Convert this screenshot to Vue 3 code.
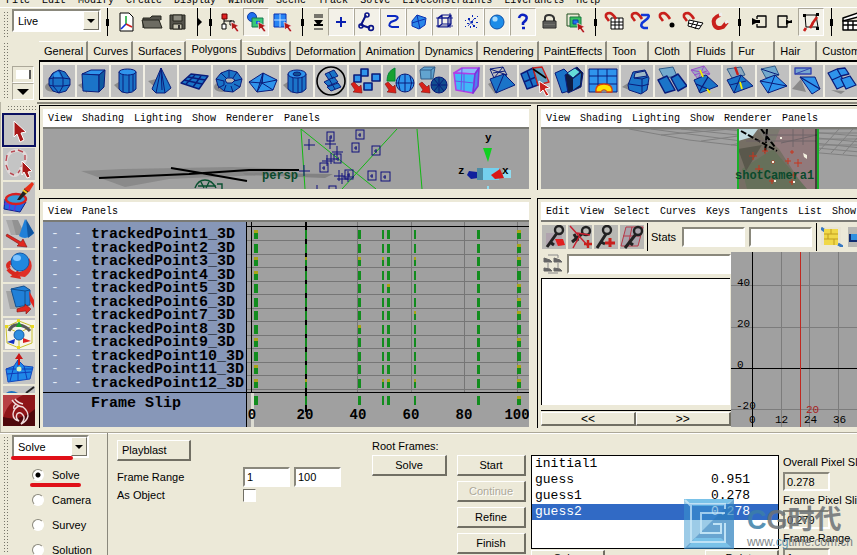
<script setup>
import { h, ref } from "vue";

const menus = [
  "File",
  "Edit",
  "Modify",
  "Create",
  "Display",
  "Window",
  "Scene",
  "Track",
  "Solve",
  "LiveConstraints",
  "LivePanels",
  "Help",
];
const viewMenus = ["View", "Shading", "Lighting", "Show", "Renderer", "Panels"];
const graphMenus = ["Edit", "View", "Select", "Curves", "Keys", "Tangents", "List", "Show"];
const shelfTabs = [
  "General",
  "Curves",
  "Surfaces",
  "Polygons",
  "Subdivs",
  "Deformation",
  "Animation",
  "Dynamics",
  "Rendering",
  "PaintEffects",
  "Toon",
  "Cloth",
  "Fluids",
  "Fur",
  "Hair",
  "Custom",
];
const activeTab = ref("Polygons");
const activeTool = ref("select");
const mode = ref("Solve");
const modes = ["Solve", "Camera", "Survey", "Solution"];
const solutions = [
  { name: "initial1", slip: "" },
  { name: "guess", slip: "0.951" },
  { name: "guess1", slip: "0.278" },
  { name: "guess2", slip: "0.278" },
];
const activeSolution = ref("guess2");
const points = Array.from({ length: 12 }, (_, i) => `trackedPoint${i + 1}_3D`);

// timeline keys: x, width, rows with a yellow tick on top
const keyColumns = [
  { x: 7, w: 4, hot: [0, 2, 3, 8, 10, 11] },
  { x: 58, w: 2, hot: [2, 11] },
  { x: 111, w: 3, hot: [2, 7] },
  { x: 135, w: 2, hot: [2, 11] },
  { x: 140, w: 3, hot: [4, 11] },
  { x: 167, w: 2, hot: [2, 6, 11] },
  { x: 230, w: 3, hot: [] },
  { x: 270, w: 4, hot: [0, 1, 2, 4, 5, 6, 8, 10, 11, 12] },
];
const keyTop = (row) => (row === 12 ? 174 : Math.round(8 + row * 13.5));
const frameLabels = [0, 20, 40, 60, 80, 100];

const trackers = [
  [24, 7, 5],
  [53, 5, 6],
  [49, 18, 5],
  [69, 21, 6],
  [31, 29, 5],
  [17, 38, 6],
  [65, 46, 6],
  [78, 47, 7],
  [42, 45, 6],
  [26, 61, 5],
];
const crosses = [
  [6, 16],
  [27, 15],
  [34, 23],
  [24, 32],
  [28, 30],
  [1, 42],
  [36, 47],
  [39, 50],
  [45, 48],
  [14, 62],
];
const features = [
  [37, 27, 4],
  [49, 22, 3],
  [43, 40, 4],
  [72, 32, 3],
  [82, 34, 4],
  [57, 33, 2],
  [76, 23, 2],
  [78, 46, 3],
  [56, 52, 3],
  [76, 53, 3],
];

const Glyph = (props) =>
  h(
    "svg",
    { viewBox: `0 0 ${props.box} ${props.box}`, width: props.box, height: props.box, "aria-hidden": "true" },
    props.parts.map(([d, fill, stroke, width]) =>
      h("path", {
        d,
        fill: fill || "none",
        stroke: stroke || "none",
        "stroke-width": width || 1,
        "stroke-linejoin": "round",
      })
    )
  );
Glyph.props = ["parts", "box"];

const circle = (x, y, r) => `M${x - r} ${y}a${r} ${r} 0 1 0 ${2 * r} 0a${r} ${r} 0 1 0 ${-2 * r} 0z`;
const ellipse = (x, y, rx, ry) => `M${x - rx} ${y}a${rx} ${ry} 0 1 0 ${2 * rx} 0a${rx} ${ry} 0 1 0 ${-2 * rx} 0z`;

const blue = "#1b74c8";
const deep = "#0f5aa0";
const sky = "#2f94ec";
const line = "#0a1c7a";
const shade = "#8a8a8a";
const red = "#c8201c";
const cursor = (x, y) => [`M${x} ${y}l8 4-3 1 3 4-2 1-3-4-2 2z`, "#b01818", "#fff", 0.6];
const redArrow = ["M2 19l3-2 5 5 2-2 1 8-9-1 2-2z", "#d82018", "#801010", 0.6];
const magnet = (x, y) => [`M${x + 4} ${y + 9}l-3-4q-1-4 4-4 3 1 6 6`, "none", red, 2.6];

const shelfIcons = [
  [
    [ellipse(10, 22, 8, 5), shade],
    ["M10 8l6-3 6 2 5 7v6l-4 6-7 2-6-2-4-6v-6z", blue, line],
    ["M16 5l4 8v8l-4 7M16 5l-6 8v8l6 7M10 8l-4 6 4-1h10l7 1M6 20l4 1h10l7-1", "none", line],
    ["M11 9l4-3 3 6h-7z", sky],
  ],
  [
    ["M1 20l9-4v12z", shade],
    ["M5 9l9-4h14l-6 5z", sky, line],
    ["M5 9l17 1v17L6 26z", blue, line],
    ["M22 10l6-5-1 17-5 5z", deep, line],
  ],
  [
    ["M3 20l8-5v13z", shade],
    ["M8 7v17q2 4 8 4t9-4V7z", blue, line],
    ["M12 10v17M18 10v18M22 9v17", "none", line],
    [ellipse(16.5, 7, 8.5, 3), sky, line],
  ],
  [
    ["M3 16l12-3v14z", shade],
    ["M16 3L7 24l4 4h9l6-5z", blue, line],
    ["M16 3l-5 25M16 3l4 25M16 3l1 22", "none", line],
  ],
  [
    ["M2 18l10-9 17 2-9 13z", blue, line, 1.4],
    ["M7 19l9-9M14 22l8-11M5 15l18 4M9 12l17 3", "none", line, 1.4],
  ],
  [
    [ellipse(9, 22, 8, 5), shade],
    ["M3 14l5-6 8-3 8 2 5 7-2 8-7 5-9-1-6-5z", blue, line],
    ["M3 14l8 2 0 4-6 3M8 8l5 5M16 5v7M24 7l-4 6M29 14l-8 2M27 22l-6-3M20 27l-2-6M11 26l2-6", "none", line],
    ["M12 15l2-2h5l3 2-3 3h-5z", "#b4b4b4", line],
  ],
  [
    ["M2 17l14-9 14 7-4 10-16 2z", sky, line],
    ["M16 8l-6 19 5-9z", blue, line],
    ["M16 8l-1 10 11 7M2 17l13 1 15-3", "none", line],
  ],
  [
    ["M2 20l8-5v13z", shade],
    ["M7 9v15q3 4 9 4t9-4V9z", blue, line],
    ["M12 12v15M17 13v15M21 12v15", "none", line],
    [ellipse(16, 9, 9, 4), sky, line],
    [ellipse(16, 9, 4, 2), "#124f90", line],
  ],
  [
    [circle(16, 16, 14), "none", "#000", 1.6],
    ["M10 9l9-4 4 6-9 4z", blue, line],
    ["M9 17l10-5 4 5-10 4zM12 22l11-4 3 4-10 4z", blue, line],
    ["M14 7l4 7M14 14l6 10", "none", line],
  ],
  [
    ["M5 10h7v7H5zM12 4h7v7h-7zM23 9h8v7h-8zM15 18h8v7h-8z", sky, line, 1.6],
    redArrow,
  ],
  [
    ["M12 3v13H4q0-10 8-13z", "#18a030", "#083"],
    [circle(22, 18, 9), sky, line],
    ["M13 18h18M22 9v18M17 11q-3 7 0 14M27 11q3 7 0 14", "none", line],
    redArrow,
  ],
  [
    ["M3 5l4-3h11l-2 12H4z", "#62a4d0", "#315c88"],
    ["M3 5h11l4-3M14 5v9", "none", "#315c88"],
    [circle(22, 20, 8), "#124f90", line],
    ["M14 20h16M22 12v16M17 14l10 12M27 14L17 26", "none", line],
    redArrow,
  ],
  [
    ["M3 8l8-5h17l-4 6z", "#89b8fa", "#b23ee6", 1.6],
    ["M3 8l21 1-2 19L5 25z", "#40b8f8", "#b23ee6", 1.6],
    ["M24 9l4-6-1 18-5 7z", "#5080f0", "#7c34dc", 1.6],
    ["M4 16l19 2M13 9l0 18M11 3l-1 22", "none", "#6a50e8"],
  ],
  [
    ["M3 19l11-6-4 16z", shade],
    ["M5 4l13-2 4 8-13 3z", "none", line],
    ["M5 14l14-5 11 11-19 8z", blue, line],
    ["M11 28l8-19M5 4l17 6M9 13l9-11M8 8l12-2", "none", line],
  ],
  [
    ["M2 9l12-6 5 17-11 4z", blue, line, 1.4],
    ["M5 17l12-5M8 6l6 16", "none", line, 1.4],
    ["M14 3l9-1 7 15-11 3z", "#60a0c0", red, 1.4],
    ["M14 4l13 9", "none", "#000", 1.6],
    ["M20 16l11 7-5 1 4 6-3 1-3-6-3 3z", red, "#fff"],
  ],
  [
    ["M2 8l9-4 5 5v17l-7 2z", blue, line],
    ["M12 10l12-8 6 6-2 14-13 6z", "#101c40", line],
    ["M14 8l8-5 5 4-7 6z", "#65dcd8", line],
    ["M20 14l8-6-1 12-7 5z", blue],
  ],
  [
    ["M2 4h28v23H2z", sky, line],
    ["M11 4v23M20 4v23M2 11h28M2 19h28", "none", line],
    ["M9 27q-1-8 8-8t8 8h-5q-3-4-6 0z", "#ffe000", "#d84008", 1.3],
    ["M14 27q3-4 6 0z", shade],
  ],
  [
    ["M1 22l12-8v13z", shade],
    ["M7 20l5-13 12-2 4 8-2 12-6 4-12-4z", blue, line],
    ["M14 8l10-2 2 5-13 2z", "#9db8c8", line],
    ["M8 19l13 2M13 13l8 1v14M21 14l6-2M21 21l7-2", "none", line],
  ],
  [
    ["M4 4l14-2 4 9-13 2z", "#71a9ce", "#315c88"],
    ["M3 15l9-4 8 14-10 3z", blue, line, 1.5],
    ["M16 13l7-4 9 12-9 5z", blue, line, 1.5],
  ],
  [
    ["M2 5l13-4 6 8-12 5z", "#9ca9c2", "#9a4fc8"],
    ["M2 5l19 4M9 14l6-13M5 10l13-4", "none", "#9a4fc8"],
    ["M5 15l12-5 12 11-18 7z", blue, line],
    ["M10 27l9-15M7 19l14 6", "none", line, 1.3],
    ["M11 5l3 7M18 24l3 4", "none", "#f4f000", 1.8],
  ],
  [
    ["M4 4l14-2 4 8-13 3z", "#8ba8be", "#315c88"],
    ["M12 2l3 8", "none", red, 2.4],
    ["M4 15l14-5 12 11-19 7z", blue, line],
    ["M11 28l7-18M7 20l16-4", "none", line],
    ["M17 17l2 7", "none", "#f4f000", 1.8],
  ],
  [
    ["M4 4l14-3 4 9-13 3z", "#71a9ce", "#315c88"],
    ["M3 16l15-6 12 11-19 7z", sky, line],
    ["M4 4l18 6M11 28l7-18M3 16l27 5", "none", line],
  ],
  [
    ["M4 3h16v6H4z", "#78a8d0", "#3344b0", 1.4],
    ["M4 9l16-6", "none", "#3344b0"],
    ["M1 24l9-10 5 13z", shade],
    ["M9 12h15l5 12-8 5z", sky, line],
    ["M9 12l20 12", "none", line, 1.3],
  ],
  [
    ["M3 8l9-4 4 7-9 4zM12 4l8-1 4 6-8 2zM7 15l9-4 5 9-9 4z", sky, line, 1.3],
    ["M16 14l9-3 6 9-10 4z", sky, line, 1.3],
    ["M6 25l14 1-4 3z", shade],
  ],
];

// status line, split by separators
const statusItems = [
  { kind: "sep first" },
  {
    parts: [
      ["M6 3h9l4 4v14H6z", "#fff", "#000"],
      ["M12 14V6", "none", "#00a020", 1.4],
      ["M12 14l-5 5", "none", "#1030d8", 1.6],
      ["M12 14l6 3", "none", "#d02020", 1.6],
    ],
  },
  {
    parts: [
      ["M3 18V8h7l2-2h9v4", "#55544c", "#24241c"],
      ["M4 18l-2-8h17l3 8z", "#6d6c62", "#24241c"],
    ],
  },
  {
    parts: [
      ["M4 5h15v14H4z", "#55544c", "#24241c"],
      ["M7 5h9v6H7z", "#8c8b80", "#24241c"],
      ["M7 14h9v5H7z", "#c8c6b4", "#24241c"],
      ["M12 15h2v4h-2z", "#333"],
    ],
  },
  { kind: "sep arrow narrow" },
  { kind: "sep narrow" },
  {
    parts: [
      ["M4 4h5v5H4z", "#e02020", "#600"],
      ["M4 14h4v5H4zM12 11h4v4h-4z", "#fff", "#000"],
      ["M6 9v5M6 11h8", "none", "#000"],
      cursor(13, 12),
    ],
  },
  {
    on: true,
    parts: [
      [circle(8, 7, 4.5), "#2070f0", "#103ca0"],
      ["M8 8h11v9H8z", "#38c878", "#187850"],
      ["M12 11h4v3h-4z", "#1860d8"],
      cursor(14, 12),
    ],
  },
  {
    parts: [
      ["M4 4h12v13H4z", "#2684f4", "#0a30b0"],
      ["M10 4v13M4 10h12", "none", "#bfe0ff"],
      cursor(14, 12),
    ],
  },
  { kind: "sep" },
  {
    parts: [
      ["M7 5h9M7 7h9M7 19h9", "none", "#000"],
      ["M7 10h9l-3 4h3v2H7v-2h3z", "#000"],
    ],
    slim: true,
  },
  { on: true, parts: [["M12 7v10M7 12h10", "none", "#0a20b0", 2]] },
  {
    on: true,
    parts: [
      ["M11 5L6 15l9 3", "none", "#0a1488", 2],
      [circle(12, 5, 2), "none", "#0a1488", 1.6],
      [circle(6, 16, 2), "none", "#0a1488", 1.6],
      [circle(16, 18, 2.4), "none", "#0a1488", 1.6],
    ],
  },
  { on: true, parts: [["M6 6h8q5 1 1 4l-5 2q-4 4 1 5h7", "none", "#0a28c0", 2]] },
  {
    on: true,
    parts: [
      ["M5 11l5-6 9 3-1 7-6 4-7-3z", "#2a86e8", "#0a30b0"],
      ["M10 5l3 14M5 13l13-4", "none", "#0a30b0"],
    ],
  },
  {
    on: true,
    parts: [
      ["M5 8h10v9H5zM9 5h9v9H9zM5 8l4-3M15 8l3-3M15 17l3-3M5 17l4-3", "none", "#0a1488", 1.2],
      ["M3 16h17M17 3v15M3 8h17", "none", "#0a1488", 0.8],
    ],
  },
  {
    on: true,
    parts: [
      [
        "M12 11h2v2h-2zM9 8h2v2H9zM15 8h2v1h-2zM8 13h2v1H8zM14 15h2v2h-2zM11 16h1v2h-1zM6 10h1v1H6zM17 12h2v1h-2zM6 16h1v1H6zM13 5h1v2h-1zM18 6h1v1h-1zM17 17h1v1h-1z",
        "#0a28b8",
      ],
      ["M9 9l6 7M15 9l-6 7", "none", "#0a28b8", 0.8],
    ],
  },
  {
    on: true,
    parts: [
      [circle(12, 12, 7), "#1c8ce8", "#0c50a8"],
      [circle(10, 9, 2.6), "#a8dcff"],
    ],
  },
  { on: true, parts: [["M8 8q1-4 5-3t2 5l-3 3v2M11 18h3", "none", "#0a20c0", 2.6]] },
  {
    parts: [
      ["M8 11V8q0-3 4-3t5 3v3", "none", "#333", 2],
      ["M6 11h13v7H6z", "#70706c", "#222"],
      ["M7 13h11M7 16h11", "none", "#444"],
    ],
  },
  {
    parts: [
      ["M4 4h12v12H4z", "none", "#205020", 1],
      ["M7 7h11v10H7z", "#38c060", "#187840"],
      ["M10 10h5v4h-5z", "#2070f0", "#103ca0"],
      cursor(14, 13),
    ],
  },
  { kind: "sep" },
  {
    parts: [
      ["M8 8h12v11H8zM12 8v11M16 8v11M8 12h12M8 15h12", "#fff", "#000"],
      magnet(2, 2),
    ],
  },
  {
    parts: [
      ["M12 5h7q2 1-1 4l-5 4q-2 4 2 5h4", "none", "#1038d8", 2.6],
      magnet(2, 2),
    ],
  },
  { parts: [[circle(17, 15, 2.5), "#000"], magnet(4, 2)] },
  {
    parts: [
      ["M8 10l14 3-4 6-11-3zM13 11l-3 6M17 12l-3 7M7 13l13 3", "#fff", "#000"],
      magnet(2, 2),
    ],
  },
  {
    parts: [
      ["M13 5q-8 3-6 9t9 3l4-5", "none", red, 4],
      ["M12 5l3-1M18 13l3-2", "none", "#eee", 3],
    ],
  },
  { kind: "sep" },
  { parts: [["M10 6h9v11h-9v-3M10 9V6", "none", "#000", 1.3], ["M5 8l4 2h4v3H9l-4 2z", "#000"]] },
  { parts: [["M14 9V6H5v11h9v-3", "none", "#000", 1.3], ["M13 9l3 2 3-1v3h-3l-3 2z", "#000"]] },
  {
    on: true,
    parts: [
      ["M6 5h11l2 12H7z", "none", "#000", 1],
      ["M4 4h3v3H4zM17 3h3v3h-3zM17 17h3v3h-3z", "#000"],
      ["M18 7l-5 7M14 13l-3 5M7 18l-2 3", "none", red, 2.6],
    ],
  },
  { kind: "sep" },
  {
    parts: [
      ["M4 8l15-5v4L4 11z", "#fff", "#000", 1.5],
      ["M4 11h20v9H4zM4 15h20M9 11v9M14 11v9M19 11v9", "#fff", "#000", 1.4],
    ],
  },
];

const tools = [
  { name: "select", parts: [["M11 7l12 11-5 1 3 7-4 2-3-8-3 3z", "#a81818", "#fff", 1]] },
  {
    name: "lasso",
    parts: [
      ["M6 6q6-6 14-2 6 5 0 12l-5 10q-5 4-9-2Q0 14 6 6", "none", "#e0dada", 3],
      ["M8 4l4-1M15 2l5 2M22 7v5M20 15l-2 4M17 22l-2 3M11 27l-4-2M5 22l-2-5M3 13l1-6", "none", "#b84a54", 1.4],
      ["M19 13l10 10-4 1 2 5-3 1-3-6-2 3z", "#a81818", "#fff", 1],
    ],
  },
  {
    name: "paint",
    parts: [
      ["M2 17l8-5 13 8-6 10-16-3z", "#2464e0", "#10208c"],
      ["M1 22h18M8 14l-2 14M15 15l-4 14", "none", "#7c20d0"],
      [ellipse(13, 17, 10, 5), "#3898d8", "#d82020", 2.4],
      ["M14 18l8-12 4 3-9 9z", "#222"],
      ["M21 7l8-7 2 2-5 8z", "#e83018"],
      ["M20 8l4 3", "none", "#f8c020", 2],
    ],
  },
  {
    name: "move",
    parts: [
      ["M3 4h7l7 15H8z", "#a8a8a8"],
      ["M9 4h6l7 15h-9z", "#929292"],
      ["M22 3l9 14q-7 8-15 3z", "#2080d8"],
      ["M23 3l8 14-6 5z", "#1056a0"],
      ["M4 18l14 8 2-3 4 8-10-1 2-2L3 20z", "#e02820", "#801010", 0.6],
    ],
  },
  {
    name: "rotate",
    parts: [
      ["M5 19q8 10 20 1M6 18q-3-5 4-6", "none", "#d82820", 4],
      ["M15 20l3 9-11-2z", "#d82820"],
      ["M26 8q7 10-4 19l-8-1 9-8z", "#e03028"],
      [circle(17, 12, 9), "#2088e0", "#1458a8"],
      [ellipse(14, 8, 4, 3), "#80c4ff"],
    ],
  },
  {
    name: "scale",
    parts: [
      ["M3 7h13l2 18H7z", "#a2a2a2"],
      ["M8 5l13-3 6 4v15l-14 2z", "#2080d8", "#125090"],
      ["M8 5l14 2 5-1M22 7v14", "none", "#125090"],
      ["M14 25l8-3v-2l6 5-5 5v-3l-9 1z", "#e02820", "#801010", 0.6],
      ["M26 7l5 9v8l-4-7z", "#e02820"],
    ],
  },
  {
    name: "manipulator",
    parts: [
      ["M2 2h30v29H2z", "#f6f4ea"],
      ["M3 9l13-6 13 5v17l-13 5-12-5zM3 9l13 6 13-7M16 15v15", "none", "#c8c030"],
      ["M6 13q3-7 10-6t11 6", "none", "#585858", 3],
      [circle(16, 17, 5), "#3090e0", "#145ca8"],
      ["M16 3l3 6h-6z", "#18a828"],
      ["M4 24l8-3-1 5z", "#1030c0"],
      ["M28 23l-8-3v5z", "#d82020"],
      ["M14 1h3v3h-3zM2 7h3v3H2zM28 7h3v3h-3zM14 28h3v3h-3z", "#e8d820"],
    ],
  },
  {
    name: "soft",
    parts: [
      ["M3 17l8-3 4-6 6 6 9 1-3 12-22 3z", "#2088e8", "#1048c0"],
      ["M11 14l-4 15M15 8v21M21 14l3 13M4 22l24-2M3 17h26", "none", "#103cb8"],
      ["M16 1l4 6h-3v6h-2V7h-3z", "#c81818"],
      [circle(16, 17, 2.5), "#d8f4c0"],
    ],
  },
];

const keyTools = [
  [
    ["M4 8h16v13H4z", "#b0a4ae"],
    [circle(17, 5, 4), "none", "#222", 2.4],
    ["M15 8L5 22M8 17l4 3", "none", "#222", 3],
    ["M13 14h8l2 6-7 1z", "#e02020"],
  ],
  [
    [circle(18, 6, 4), "none", "#222", 2.4],
    ["M15 8L4 17M6 9l4 7", "none", "#222", 3],
    ["M2 1l18 20M11 12L5 23M9 8l13 2", "none", "#c82030", 1.5],
    ["M20 15v8M16 19h8", "none", red, 2.4],
  ],
  [
    [circle(13, 5, 4), "none", "#222", 2.4],
    ["M12 9L3 23M7 17l4 2", "none", "#222", 3],
    ["M16 13v9M11 18h10", "none", red, 3],
  ],
  [
    ["M6 2h17l-5 19H1z", "#aaa4ac", "#b83848"],
    ["M12 2L8 21M3 11h17", "none", "#b83848"],
    [circle(18, 6, 4), "none", "#222", 2.4],
    ["M16 9L5 23M9 17l4 3", "none", "#222", 3],
  ],
];
</script>

<template>
  <div class="maya">
    <nav class="menu-bar">
      <button v-for="item in menus" :key="item" class="menu-bar__item">{{ item }}</button>
    </nav>

    <div class="status">
      <span class="grip"></span>
      <label class="combo combo--live">
        <select class="combo__select" aria-label="Menu set">
          <option>Live</option>
        </select>
        <span class="combo__arrow"></span>
      </label>
      <template v-for="(item, i) in statusItems" :key="i">
        <span v-if="item.kind" class="status__sep" :class="item.kind"></span>
        <button
          v-else
          class="status__button"
          :class="{ 'status__button--on': item.on, 'status__button--slim': item.slim }"
          :aria-label="`Status tool ${i}`"
        >
          <Glyph :parts="item.parts" :box="24" />
        </button>
      </template>
    </div>

    <div class="shelf">
      <span class="grip"></span>
      <div class="shelf__side">
        <button class="shelf__switch" aria-label="Shelf tabs"><i class="shelf__page"></i></button>
        <button class="shelf__switch" aria-label="Shelf menu"><i class="triangle"></i></button>
      </div>
      <div class="shelf__main">
        <div class="tabs">
          <button
            v-for="tab in shelfTabs"
            :key="tab"
            class="tabs__item"
            :class="{ 'tabs__item--active': tab === activeTab }"
            @click="activeTab = tab"
          >
            {{ tab }}
          </button>
        </div>
        <div class="shelf__icons">
          <button v-for="(parts, i) in shelfIcons" :key="i" class="shelf__icon" :aria-label="`Polygon tool ${i + 1}`">
            <Glyph :parts="parts" :box="32" />
          </button>
        </div>
      </div>
    </div>

    <div class="work">
      <aside class="toolbox">
        <span class="toolbox__grip"></span>
        <button
          v-for="tool in tools"
          :key="tool.name"
          class="toolbox__item"
          :class="{ 'toolbox__item--active': tool.name === activeTool }"
          :aria-label="tool.name"
          @click="activeTool = tool.name"
        >
          <Glyph :parts="tool.parts" :box="32" />
        </button>
        <span class="toolbox__rest">
          <svg width="32" height="7" viewBox="0 0 32 7">
            <path d="M3 7q5-4 12 0z" fill="#1d70c0" />
            <path d="M23 7l8-6" stroke="#222" stroke-width="2" />
          </svg>
        </span>
        <svg class="toolbox__logo" width="32" height="31" viewBox="0 0 32 31" aria-hidden="true">
          <path d="M0 0h32v31H0z" fill="#8e1518" />
          <path d="M0 0h20Q3 8 0 24z" fill="#b84044" />
          <path d="M0 22q18 5 32-8v17H0z" fill="#4d080c" />
          <path
            d="M9 5q4 6 11 7 5 4 5 9-1 5-7 8 5-6 2-9-3-4-6-1-2 4 2 7-6-1-6-7 1-6 6-8M12 4q3 4 8 5M11 14q-1-3 2-5"
            fill="none"
            stroke="#f0dcdc"
            stroke-width="1.4"
          />
        </svg>
      </aside>

      <div class="panels">
        <section class="panel">
          <nav class="panel__menu">
            <button v-for="item in viewMenus" :key="item">{{ item }}</button>
          </nav>
          <svg class="panel__canvas" role="img" aria-label="persp">
            <path d="M38 42l42-2 108-2 60 2-32 6-90 4-44 8z" fill="#8a8a8a" />
            <path d="M200 44l90 1-8 4-80-3z" fill="#828282" />
            <path d="M56 49l90-4 60-4 50 0M128 39l30 5 46 8" fill="none" stroke="#000" stroke-width="2" />
            <g fill="none" stroke="#12b812">
              <path d="M258 0l4 60M258 0l75 60M354 0l-55 60M374 0l5 60" />
            </g>
            <g fill="none" stroke="#0a5030" stroke-width="1.4">
              <path d="M152 59q3-8 10-8t11 8M155 57h18M158 53l3 6M166 53l-3 6M174 55h5v5" />
            </g>
            <g fill="none" stroke="#10107c" transform="translate(260 0)">
              <template v-for="(t, i) in trackers" :key="i">
                <rect :x="t[0]" :y="t[1] - 4" :width="t[2] + 2" height="9" />
                <path :d="`M${t[0] + 2} ${t[1] + 1}h3M${t[0] + 4} ${t[1] - 1}v4`" />
              </template>
              <path v-for="(c, i) in crosses" :key="`c${i}`" :d="`M${c[0] - 5} ${c[1]}h11M${c[0]} ${c[1] - 6}v11`" />
            </g>
            <text x="219" y="50" class="camera-label">persp</text>
            <g>
              <path d="M440 19h9l-4 14z" fill="#10d020" />
              <path d="M424 46l2-4 16 2v4l-14 2z" fill="#10209c" />
              <rect x="436" y="39" width="20" height="12" fill="#74d0ee" />
              <rect x="434" y="39" width="6" height="12" fill="#4e8ca4" />
              <path d="M460 41h8v8h-8z" fill="#90dcf0" />
              <path d="M448 46l9-6 4 9-9 1z" fill="#d81818" />
              <path d="M444 57h2v3h-2z" fill="#90dcf0" />
              <text x="442" y="12" class="axis-label">y</text>
              <text x="415" y="45" class="axis-label">z</text>
              <text x="459" y="45" class="axis-label">x</text>
            </g>
          </svg>
        </section>

        <section class="panel">
          <nav class="panel__menu">
            <button v-for="item in viewMenus" :key="item">{{ item }}</button>
          </nav>
          <svg class="panel__canvas" role="img" aria-label="shotCamera1">
            <g fill="none" stroke="#808080">
              <path d="M88 0l60 11 70 8 110 9M110 0l90 12 130 12M140 0l190 20M180 0l150 14M230 0l100 8" />
              <path d="M278 22l20-22M290 24l22-24M302 25l22-25M160 12l90-12M190 16l80-16M120 6l70-6M90 0h240M276 4h60M276 10h60M276 16h60" />
            </g>
            <path d="M197 0h79v60h-79z" fill="#766f64" />
            <path d="M216 0h60v60h-12L238 20z" fill="#917a7c" />
            <path d="M197 0h20l-6 8-14 4z" fill="#c4dce0" />
            <path d="M232 20l34 40h-60l-5-20z" fill="#66705a" />
            <path d="M197 20l24-4-16 26z" fill="#5a584c" />
            <path d="M217 0h22l-9 22z" fill="#7c7a70" />
            <path d="M200 2l36 20M220 0l14 18M226 0l-2 24" fill="none" stroke="#000" stroke-width="2" stroke-dasharray="6 2" />
            <path d="M205 12h70M222 6h54M240 14l36-8M252 0v18M262 0v16" fill="none" stroke="#6f6468" />
            <path
              v-for="(f, i) in features"
              :key="i"
              :d="`M${f[0] + 175 - f[2]} ${f[1]}h${f[2] * 2}M${f[0] + 175} ${f[1] - f[2]}v${f[2] * 2}`"
              stroke="#c8341c"
            />
            <path d="M262 24l4 2v4l-3-2zM233 51h2v2h-2zM252 52h2v2h-2zM231 32h2v2h-2zM239 8h2v2h-2z" fill="#f4f0e0" />
            <path d="M197 0v60M277 0v60" stroke="#18b028" stroke-width="2" />
            <path d="M275 0v60" stroke="#000" />
            <text x="194" y="50" class="camera-label">shotCamera1</text>
          </svg>
        </section>

        <section class="panel">
          <nav class="panel__menu">
            <button>View</button>
            <button>Panels</button>
          </nav>
          <div class="dope">
            <div class="dope__names">
              <ul class="dope__list">
                <li v-for="point in points" :key="point"><i>-</i><i>-</i>{{ point }}</li>
              </ul>
              <div class="dope__footer">Frame Slip</div>
            </div>
            <svg class="dope__keys" role="img" aria-label="Keys">
              <g fill="#767676">
                <rect v-for="n in 12" :key="n" x="0" :y="Math.round(4.5 + n * 13.5)" width="100%" height="1" />
                <rect v-for="x in [110, 164, 217, 270]" :key="x" :x="x" y="0" width="1" height="170" />
              </g>
              <rect x="4" y="171" width="3" height="34" fill="#dcdcd2" />
              <rect x="0" y="4" width="100%" height="1" />
              <rect x="0" y="170" width="100%" height="1" />
              <rect x="4" y="0" width="1" height="170" />
              <rect x="58" y="0" width="2" height="190" />
              <template v-for="col in keyColumns" :key="col.x">
                <template v-for="row in 13" :key="row">
                  <rect :x="col.x" :y="keyTop(row - 1)" :width="col.w" height="9" fill="#128c1e" />
                  <rect
                    v-if="col.hot.includes(row - 1)"
                    :x="col.x"
                    :y="keyTop(row - 1)"
                    :width="col.w"
                    height="3"
                    fill="#a8a418"
                  />
                </template>
              </template>
              <text v-for="(label, i) in frameLabels" :key="label" :x="5 + i * 53" y="197" class="frame-label">
                {{ label }}
              </text>
            </svg>
          </div>
        </section>

        <section class="panel">
          <nav class="panel__menu">
            <button v-for="item in graphMenus" :key="item">{{ item }}</button>
          </nav>
          <div class="graph-tools">
            <button v-for="(parts, i) in keyTools" :key="i" class="graph-tools__key" :aria-label="`Key tool ${i + 1}`">
              <Glyph :parts="parts" :box="24" />
            </button>
            <label class="graph-tools__stats">
              Stats
              <input type="text" class="field" />
            </label>
            <input type="text" class="field" aria-label="Value" />
            <span class="graph-tools__sep"></span>
            <svg width="22" height="20" viewBox="0 0 22 20" aria-hidden="true">
              <path d="M0 0h20v18H0z" fill="#e8e4d4" />
              <path d="M0 1l4 3M17 17l5 3" stroke="#3878c0" stroke-width="3" />
              <path d="M3 2h14v16H3z" fill="#f0d848" />
              <path d="M3 7h14M3 12h14M10 2v5M7 7v5M13 12v6" stroke="#c09c20" />
            </svg>
            <svg class="graph-tools__frame" width="22" height="20" viewBox="0 0 22 20" aria-hidden="true">
              <path d="M0 0h22v20H0z" fill="#b8b8b4" />
              <path d="M2 7v7h18V7" fill="#3090e0" stroke="#102c70" stroke-width="2" />
            </svg>
          </div>
          <div class="graph">
            <div class="graph__outline">
              <div class="graph__filter">
                <svg width="22" height="20" viewBox="0 0 22 20" aria-hidden="true">
                  <path d="M2 4l6 2 2 2H2zM12 4l6 2 2 2h-8zM2 14l6 1 2 2H2zM12 14l6 1 2 2h-8z" fill="#666" stroke="#666" />
                  <path d="M6 1h10v3M6 9v5M16 9v5M6 19h10" fill="none" stroke="#888" />
                </svg>
                <input type="text" class="field" aria-label="Filter" />
              </div>
              <div class="graph__list"></div>
              <div class="graph__nav">
                <button class="button">&lt;&lt;</button>
                <button class="button">&gt;&gt;</button>
              </div>
            </div>
            <svg class="graph__plot" role="img" aria-label="Curves">
              <g fill="#7c7c7c">
                <rect v-for="y in [33, 75, 157]" :key="y" x="0" :y="y" width="100%" height="1" />
                <rect v-for="x in [50, 78, 107]" :key="x" :x="x" y="0" width="1" height="100%" />
              </g>
              <rect x="0" y="116" width="100%" height="1" />
              <rect x="21" y="0" width="1" height="100%" />
              <rect x="69" y="0" width="1" height="100%" fill="#c02820" />
              <g class="plot-label">
                <text x="6" y="34">40</text>
                <text x="6" y="75">20</text>
                <text x="6" y="116">0</text>
                <text x="5" y="157">-20</text>
                <text x="18" y="171">0</text>
                <text x="44" y="171">12</text>
                <text x="73" y="171">24</text>
                <text x="102" y="171">36</text>
                <text x="75" y="161" fill="#a82020">20</text>
              </g>
            </svg>
          </div>
        </section>
      </div>
    </div>

    <div class="live">
      <span class="grip"></span>
      <div class="live__modes">
        <label class="combo combo--mode">
          <select class="combo__select" aria-label="Panel">
            <option>Solve</option>
          </select>
          <span class="combo__arrow"></span>
        </label>
        <label v-for="item in modes" :key="item" class="radio">
          <input v-model="mode" type="radio" name="mode" :value="item" />
          {{ item }}
        </label>
        <span class="mark mark--combo"></span>
        <span class="mark mark--radio"></span>
      </div>

      <div class="live__range">
        <button class="button button--left">Playblast</button>
        <div class="form-row">
          <label for="range-start">Frame Range</label>
          <input id="range-start" type="text" class="field" value="1" />
          <input type="text" class="field" value="100" aria-label="Range end" />
        </div>
        <div class="form-row form-row--check">
          <label for="as-object">As Object</label>
          <input id="as-object" type="checkbox" class="check" />
        </div>
      </div>

      <div class="live__root">
        <span>Root Frames:</span>
        <button class="button">Solve</button>
      </div>

      <div class="live__actions">
        <button class="button">Start</button>
        <button class="button" disabled>Continue</button>
        <button class="button">Refine</button>
        <button class="button">Finish</button>
      </div>

      <div class="live__solutions">
        <ul class="solutions">
          <li
            v-for="item in solutions"
            :key="item.name"
            :class="{ active: item.name === activeSolution }"
            @click="activeSolution = item.name"
          >
            <span>{{ item.name }}</span><span>{{ item.slip }}</span>
          </li>
        </ul>
        <div class="live__pair">
          <button class="button">Solve</button>
          <button class="button">Delete</button>
        </div>
      </div>

      <div class="live__slip">
        <label>Overall Pixel Slip<input type="text" class="field" value="0.278" readonly /></label>
        <label>Frame Pixel Slip<input type="text" class="field" value="0.279" readonly /></label>
        <label>Frame Range<input type="text" class="field" value="1" readonly /></label>
      </div>

      <div class="watermark">
        <svg width="52" height="52" viewBox="0 0 52 52" aria-hidden="true">
          <path d="M1 1h50v50H1z" fill="#3d9ad0" fill-opacity="0.6" />
          <path d="M1 51L51 1v50z" fill="#2878b8" fill-opacity="0.6" />
          <path d="M1 1h50L40 8H10zM12 40h26l10 9H5z" fill="#63b8e4" />
          <path d="M8 8L2 2M42 11V6H8v38h34V25M42 15H18v20h20v-9h-8" fill="none" stroke="#b4def4" stroke-width="2" />
        </svg>
        <div class="watermark__text">
          <strong><b>C</b>G时代</strong>
          <span>www.<b>cg</b>time.com.cn</span>
        </div>
      </div>
    </div>
  </div>
</template>

<style>
body {
  margin: 0;
  overflow: hidden;
}
</style>

<style scoped>
.maya {
  --face: #ece9d8;
  --dark: #716f64;
  --grey: #a0a0a0;
  display: flex;
  flex-direction: column;
  height: 100vh;
  overflow: hidden;
  background: var(--face);
  color: #000;
  font: 11px/14px "Liberation Sans", sans-serif;
}

.maya * {
  box-sizing: border-box;
}

button,
input,
select {
  margin: 0;
  padding: 0;
  border: 0;
  border-radius: 0;
  background: none;
  color: inherit;
  font: inherit;
}

svg {
  display: block;
  flex: none;
}

ul {
  margin: 0;
  padding: 0;
  list-style: none;
}

.menu-bar {
  display: flex;
  flex: 0 0 7px;
  align-items: flex-end;
  gap: 12px;
  padding-left: 6px;
  overflow: hidden;
}

.menu-bar__item,
.panel__menu button {
  flex: none;
  font: 10px/12px "Liberation Mono", monospace;
  white-space: nowrap;
}

.grip {
  flex: none;
  width: 5px;
  margin: 3px 4px 2px 3px;
  background: radial-gradient(circle, #77756a 0 0.8px, transparent 1px) 0 0 / 3px 3px;
}

.status {
  display: flex;
  flex: 0 0 32px;
  border-top: 1px solid #fff;
  overflow: hidden;
}

.status > * {
  flex: none;
}

.combo {
  position: relative;
  display: flex;
  height: 23px;
  border: 2px solid;
  border-color: #8a887c #fff #fff #8a887c;
  background: #fff;
}

.combo--live {
  width: 89px;
  margin-top: 1px;
}

.combo--mode {
  width: 77px;
}

.combo__select {
  flex: 1;
  padding-left: 4px;
  appearance: none;
  outline: none;
}

.combo__arrow {
  display: flex;
  align-items: center;
  justify-content: center;
  width: 16px;
  border: 1px solid;
  border-color: #fff var(--dark) var(--dark) #fff;
  background: var(--face);
  pointer-events: none;
}

.combo__arrow::before,
.triangle {
  border: 4px solid transparent;
  border-top-color: #000;
  border-bottom: 0;
  content: "";
}

.triangle {
  border-width: 6px 6px 0;
}

.status__sep {
  display: flex;
  align-items: center;
  justify-content: center;
  width: 14px;
  height: 28px;
  background: linear-gradient(#000, #000) center / 1px 100% no-repeat;
}

.status__sep::before {
  width: 3px;
  height: 7px;
  background: #000;
  content: "";
}

.status__sep.first {
  width: 12px;
}

.status__sep.narrow {
  width: 13px;
}

.status__sep.arrow::before {
  width: 0;
  height: 0;
  margin-left: 4px;
  border: 4px solid transparent;
  border-left-color: #000;
  border-right: 0;
  background: none;
}

.status__button {
  display: flex;
  align-items: center;
  justify-content: center;
  width: 26px;
  height: 28px;
  border: 1px solid transparent;
  overflow: hidden;
}

.status__button--on {
  border-color: #aca899 #fff #fff #aca899;
  background: #f3f1e8;
}

.status__button--slim {
  width: 19px;
}

.shelf {
  display: flex;
  flex: 0 0 63px;
}

.shelf__side {
  display: flex;
  flex-direction: column;
  width: 26px;
  padding-top: 27px;
}

.shelf__switch {
  display: flex;
  align-items: center;
  justify-content: center;
  width: 22px;
  height: 17px;
  border: 1px solid;
  border-color: #aca899 #fff #fff #aca899;
}

.shelf__page {
  width: 15px;
  height: 9px;
  border-right: 2px solid #555;
  background: #fff;
}

.shelf__main {
  display: flex;
  flex: 1;
  flex-direction: column;
  min-width: 0;
}

.tabs {
  display: flex;
  height: 21px;
  align-items: flex-end;
  padding-left: 1px;
  overflow: hidden;
}

.tabs__item {
  flex: none;
  min-width: 42px;
  height: 19px;
  padding: 0 3px 0 5px;
  border-top: 1px solid #fff;
  border-right: 2px solid #8c8a7e;
  text-align: left;
  white-space: nowrap;
}

.tabs__item--active {
  height: 21px;
  padding-bottom: 3px;
}

.shelf__icons {
  display: flex;
  height: 40px;
  gap: 2px;
  padding: 3px 0 0 3px;
  margin-left: 1px;
  border: solid #000;
  border-width: 2px 0 1px 1px;
  background: #f1efe4;
  overflow: hidden;
}

.shelf__icon {
  flex: none;
  width: 32px;
  height: 32px;
  background: #c0c0c0;
}

.work {
  display: flex;
  flex: 1;
  min-height: 0;
}

.toolbox {
  display: flex;
  flex: 0 0 37px;
  flex-direction: column;
  gap: 2px;
  padding: 3px 0 0 2px;
  border-left: 1px solid #b8b5a5;
  overflow: hidden;
}

.toolbox__grip {
  flex: none;
  width: 30px;
  height: 5px;
  margin: 0 0 2px 4px;
  background: radial-gradient(circle, #77756a 0 0.8px, transparent 1px) 0 0 / 3px 3px;
}

.toolbox__item {
  flex: none;
  width: 32px;
  height: 32px;
  background: #c4c4c4;
}

.toolbox__item--active {
  outline: 2px solid #0a1060;
  outline-offset: -1px;
}

.toolbox__rest {
  flex: none;
  width: 32px;
  height: 7px;
  background: #c4c4c4;
}

.panels {
  display: grid;
  flex: 1;
  grid-template-rows: 85px minmax(0, 1fr);
  grid-template-columns: 492fr 320fr;
  gap: 8px 6px;
  min-width: 0;
  padding: 1px 0 4px 2px;
  border-top: 2px solid #8a887c;
}

.panel {
  display: flex;
  flex-direction: column;
  min-width: 0;
  min-height: 0;
  padding: 3px 2px 1px 3px;
  border: solid #000;
  border-width: 1px 0 0 1px;
}

.panel:nth-child(even) {
  padding-right: 0;
}

.panel__menu {
  display: flex;
  flex: 0 0 20px;
  align-items: center;
  gap: 10px;
  padding: 1px 0 0 5px;
  border-bottom: 2px solid #7a7a74;
  background: #fff;
  overflow: hidden;
}

.panel__canvas {
  flex: 1;
  width: 100%;
  min-height: 0;
  background: var(--grey);
}

.camera-label {
  fill: #0a4a2c;
  font: bold 12px "Liberation Mono", monospace;
}

.axis-label {
  font: bold 11px "Liberation Mono", monospace;
}

.dope {
  display: flex;
  flex: 1;
  min-height: 0;
}

.dope__names {
  display: flex;
  flex: 0 0 204px;
  flex-direction: column;
  border-right: 1px solid #000;
  background: #8797b8;
  font: bold 15px/14px "Liberation Mono", monospace;
}

.dope__list {
  display: grid;
  flex: 1;
  grid-auto-rows: minmax(0, 1fr);
  min-height: 0;
  padding: 6px 0 2px;
}

.dope__list li {
  display: flex;
  white-space: nowrap;
}

.dope__list i {
  width: 23px;
  padding-left: 6px;
  color: #e4ecf8;
  font: 13px/12px "Liberation Mono", monospace;
}

.dope__list i:first-child {
  margin-left: 2px;
}

.dope__footer {
  flex: 0 0 35px;
  padding: 4px 0 0 48px;
  border-top: 1px solid #000;
}

.dope__keys {
  flex: 1;
  min-width: 0;
  height: 100%;
  background: var(--grey);
}

.frame-label {
  font: bold 14px "Liberation Mono", monospace;
  text-anchor: middle;
}

.graph-tools {
  display: flex;
  flex: 0 0 30px;
  align-items: center;
  gap: 2px;
  padding-left: 1px;
  overflow: hidden;
}

.graph-tools > * {
  flex: none;
}

.graph-tools__key {
  width: 24px;
  height: 24px;
  background: #b8b8b4;
}

.graph-tools__stats {
  display: flex;
  align-items: center;
  gap: 6px;
  height: 28px;
  padding: 0 2px 0 3px;
  margin-left: 1px;
  border-left: 1px solid #000;
}

.graph-tools .field {
  width: 63px;
}

.graph-tools__sep {
  width: 1px;
  height: 28px;
  margin: 0 2px;
  background: #000;
}

.graph-tools__frame {
  margin-left: 3px;
}

.field {
  height: 20px;
  padding: 0 2px;
  border: 2px solid;
  border-color: #8a887c #fff #fff #8a887c;
  background: #fff;
  outline: none;
}

.graph {
  display: flex;
  flex: 1;
  min-height: 0;
}

.graph__outline {
  display: flex;
  flex: 3;
  flex-direction: column;
  min-width: 0;
}

.graph__filter {
  display: flex;
  gap: 3px;
  padding: 2px 0 4px 1px;
}

.graph__filter .field {
  flex: 1;
  min-width: 0;
}

.graph__list {
  flex: 1;
  min-height: 0;
  margin-right: 1px;
  border: solid #000;
  border-width: 1px 0 0 1px;
  background: #fff;
}

.graph__nav {
  display: flex;
  height: 22px;
  padding-top: 7px;
  background: linear-gradient(#000, #000) 0 5px / 100% 1px no-repeat;
}

.graph__nav .button {
  flex: 1;
  height: 14px;
  font-size: 12px;
  line-height: 10px;
}

.graph__plot {
  flex: 2;
  min-width: 0;
  height: 100%;
  background: var(--grey);
}

.plot-label {
  font: 11px "Liberation Mono", monospace;
}

.button {
  height: 21px;
  border: solid;
  border-width: 1px 2px 2px 1px;
  border-color: #fff var(--dark) var(--dark) #fff;
  background: var(--face);
}

.button:disabled {
  color: #aca899;
  text-shadow: 1px 1px 0 #fff;
}

.button--left {
  width: 74px;
  padding-left: 4px;
  text-align: left;
}

.live {
  position: relative;
  display: flex;
  flex: 0 0 123px;
  border-top: 1px solid #aca899;
  box-shadow: inset 0 1px 0 #fff;
  overflow: hidden;
}

.live__modes {
  position: relative;
  width: 96px;
  flex: none;
  padding-top: 2px;
  border-right: 1px solid #8a887c;
}

.radio {
  display: flex;
  align-items: center;
  gap: 8px;
  height: 25px;
  padding-left: 20px;
}

.combo--mode + .radio {
  margin-top: 4px;
}

.radio input {
  width: 12px;
  height: 12px;
  border: 1px solid;
  border-color: #8a887c #fff #fff #8a887c;
  border-radius: 50%;
  appearance: none;
  background: #fff;
}

.radio input:checked {
  background: radial-gradient(circle, #000 0 2px, #fff 3px);
}

.mark {
  position: absolute;
  height: 4px;
  border-radius: 2px;
  background: #e01018;
}

.mark--combo {
  top: 23px;
  left: -1px;
  width: 62px;
}

.mark--radio {
  top: 50px;
  left: 18px;
  width: 51px;
}

.live__range {
  display: flex;
  flex: 0 0 264px;
  flex-direction: column;
  padding: 7px 0 0 9px;
}

.form-row {
  display: flex;
  align-items: center;
  gap: 4px;
}

.form-row label {
  width: 122px;
}

.form-row .field {
  width: 47px;
}

.button--left + .form-row {
  margin-top: 6px;
}

.form-row--check {
  margin-top: 1px;
}

.check {
  width: 13px;
  height: 13px;
  border: 1px solid;
  border-color: #716f64 #fff #fff #716f64;
  appearance: none;
  background: #fff;
}

.live__root {
  display: flex;
  flex: 0 0 75px;
  flex-direction: column;
  gap: 2px;
  padding-top: 6px;
}

.live__actions {
  display: flex;
  flex: 0 0 69px;
  flex-direction: column;
  gap: 5px;
  margin: 22px 5px 0 10px;
}

.live__actions .button {
  flex: none;
}

.live__solutions {
  display: flex;
  flex: 1;
  flex-direction: column;
  gap: 1px;
  margin-top: 22px;
  min-width: 0;
}

.solutions {
  flex: 0 0 94px;
  border: 1px solid #000;
  background: #fff;
  font: 13px/16px "Liberation Mono", monospace;
}

.solutions li {
  display: flex;
  justify-content: space-between;
  padding: 0 28px 0 3px;
}

.solutions .active {
  background: #316ac5;
  color: #fff;
}

.live__pair {
  display: flex;
  justify-content: space-between;
}

.live__pair .button {
  width: 74px;
  height: 17px;
}

.live__slip {
  display: flex;
  flex: 0 0 78px;
  flex-direction: column;
  min-width: 0;
  padding: 22px 0 0 4px;
  white-space: nowrap;
}

.live__slip label {
  display: flex;
  flex-direction: column;
  gap: 3px;
  flex: 0 0 38px;
}

.live__slip .field {
  width: 47px;
  height: 19px;
  background: var(--face);
}

.watermark {
  position: absolute;
  right: 4px;
  bottom: 5px;
  display: flex;
  align-items: flex-end;
  gap: 12px;
  opacity: 0.85;
  color: #6c7276;
  pointer-events: none;
}

.watermark__text {
  display: flex;
  flex-direction: column;
}

.watermark strong {
  font: bold 27px/30px "Liberation Sans", "Noto Sans CJK SC", sans-serif;
}

.watermark b {
  color: #3c7fa8;
}

.watermark span {
  font-size: 12px;
  line-height: 15px;
}

.watermark span b {
  font-weight: normal;
}
</style>
